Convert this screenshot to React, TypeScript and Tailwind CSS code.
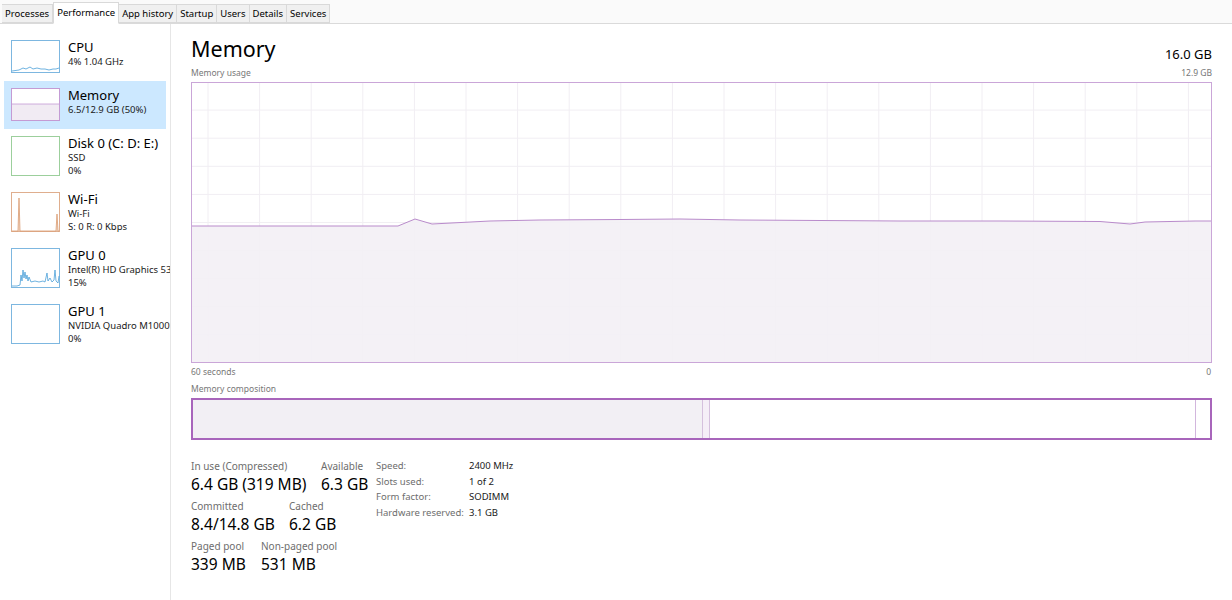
import React from 'react';

const tabs = ['Processes', 'Performance', 'App history', 'Startup', 'Users', 'Details', 'Services'];

// thumbnails in the left list
const Thumb = ({ kind, h }: { kind: string; h: number }) => {
  const w = 49;
  const border: Record<string, string> = {
    cpu: '#7db7e0',
    mem: '#c49bd4',
    disk: '#9ccf9c',
    wifi: '#dfae8e',
    gpu0: '#7db7e0',
    gpu1: '#7db7e0',
  };
  return (
    <svg width={w} height={h} className="shrink-0">
      <rect x={0.5} y={0.5} width={w - 1} height={h - 1} fill="white" stroke={border[kind]} />
      {kind === 'cpu' && (
        <polyline
          points="1,31 8,30 12,28 15,29 19,27 22,29 26,28 30,29 34,29 38,30 42,29 45,29 48,28"
          fill="none"
          stroke="#4aa0d8"
          strokeWidth={0.8}
        />
      )}
      {kind === 'mem' && (
        <>
          <rect x={1} y={16} width={w - 2} height={h - 17} fill="#f1ebf3" />
          <line x1={1} y1={16} x2={w - 1} y2={16} stroke="#c49bd4" strokeWidth={0.8} />
        </>
      )}
      {kind === 'wifi' && (
        <>
          <polygon points="7,39 8,6 9,39" fill="#f4dccb" />
          <polygon points="45,39 46,22 47,39" fill="#f4dccb" />
          <polyline points="1,39 7,39 8,6 9,39 45,39 46,22 47,39 48,39" fill="none" stroke="#d99a70" strokeWidth={0.8} />
        </>
      )}
      {kind === 'gpu0' && (
        <polyline
          points="1,38 6,38 9,37 10,27 11,33 12,22 13,30 14,24 15,31 16,27 17,33 18,29 20,34 24,33 28,34 32,33 34,34 36,25 37,33 39,30 41,34 43,32 44,22 45,33 47,35 48,28"
          fill="none"
          stroke="#4aa0d8"
          strokeWidth={0.8}
        />
      )}
    </svg>
  );
};

const items = [
  { kind: 'cpu', title: 'CPU', lines: ['4%  1.04 GHz'], h: 33 },
  { kind: 'mem', title: 'Memory', lines: ['6.5/12.9 GB (50%)'], h: 33, active: true },
  { kind: 'disk', title: 'Disk 0 (C: D: E:)', lines: ['SSD', '0%'], h: 40 },
  { kind: 'wifi', title: 'Wi-Fi', lines: ['Wi-Fi', 'S: 0  R: 0 Kbps'], h: 40 },
  { kind: 'gpu0', title: 'GPU 0', lines: ['Intel(R) HD Graphics 530', '15%'], h: 40 },
  { kind: 'gpu1', title: 'GPU 1', lines: ['NVIDIA Quadro M1000M', '0%'], h: 40 },
];

// usage line, in chart coordinates (chart is 1021 x 281)
const usage = [
  [0, 144], [207, 144], [224, 137], [241, 142], [299, 139], [349, 138], [429, 137.5],
  [489, 137], [549, 138], [709, 139], [809, 139], [909, 139.5], [939, 142], [954, 140],
  [1004, 139], [1021, 139],
];

const Chart = () => {
  const W = 1021;
  const H = 281;
  const cols = Array.from({ length: 20 }, (_, i) => 17 + i * 51.6);
  const rows = Array.from({ length: 9 }, (_, i) => (i + 1) * 28.1);
  const line = usage.map((p) => p.join(',')).join(' ');
  const area = `0,${H} ${line} ${W},${H}`;
  return (
    <svg width={W} height={H} className="block">
      <rect x={0} y={0} width={W} height={H} fill="white" />
      {cols.map((x) => (
        <line key={x} x1={x} y1={0} x2={x} y2={H} stroke="#f1eef3" />
      ))}
      {rows.map((y) => (
        <line key={y} x1={0} y1={y} x2={W} y2={y} stroke="#f1eef3" />
      ))}
      <polygon points={area} fill="#f3f0f5" fillOpacity={0.9} />
      <polyline points={line} fill="none" stroke="#b98bcb" strokeWidth={1} />
      <rect x={0.5} y={0.5} width={W - 1} height={H - 1} fill="none" stroke="#caa6d8" />
    </svg>
  );
};

const Stat = ({ label, value, className = '' }: { label: string; value: string; className?: string }) => (
  <div className={className}>
    <div className="text-[10px] leading-[13px] text-[#6d6d6d]">{label}</div>
    <div className="text-[15.5px] leading-[22px] text-black">{value}</div>
  </div>
);

export default function App() {
  return (
    <div
      className="w-[1232px] h-[600px] bg-white overflow-hidden text-black"
      style={{ fontFamily: '"Noto Sans", "Open Sans", sans-serif' }}
    >
      {/* tabs */}
      <div className="h-[24px] flex items-end pl-[2px] border-b border-[#dadada] bg-[#fafafa]">
        {tabs.map((t) => (
          <div
            key={t}
            className={
              t === 'Performance'
                ? 'h-[22px] px-[3px] -mb-px bg-white border border-[#d9d9d9] border-b-white text-[9.5px] leading-[20px] text-black'
                : 'h-[19px] px-[3px] bg-[#f0f0f0] border border-[#d9d9d9] border-l-0 text-[9.5px] leading-[18px] text-black'
            }
          >
            {t}
          </div>
        ))}
      </div>

      <div className="flex">
        {/* left list */}
        <div className="w-[171px] shrink-0 h-[576px] overflow-hidden border-r border-[#e6e6e6] pt-[9px] pl-[4px]">
          {items.map((it) => (
            <div
              key={it.title}
              className={`w-[162px] flex gap-[8px] pl-[7px] ${it.active ? 'bg-[#cce8ff]' : ''} ${
                it.h === 33 ? 'h-[48px] pt-[7px]' : 'h-[56px] pt-[7px]'
              }`}
            >
              <Thumb kind={it.kind} h={it.h} />
              <div className="whitespace-nowrap">
                <div className="text-[13px] leading-[16px] -mt-[1px]">{it.title}</div>
                {it.lines.map((l) => (
                  <div key={l} className="text-[9.5px] leading-[13px] text-[#1a1a1a]">
                    {l}
                  </div>
                ))}
              </div>
            </div>
          ))}
        </div>

        {/* main panel */}
        <div className="flex-1 pl-[20px] pr-[20px] pt-[9px]">
          <div className="flex items-end justify-between">
            <div className="text-[21.5px] leading-[32px]">Memory</div>
            <div className="text-[13px] leading-[18px] pb-[2px]">16.0 GB</div>
          </div>
          <div className="flex justify-between text-[8.5px] leading-[14px] text-[#777] mt-[1px]">
            <span>Memory usage</span>
            <span>12.9 GB</span>
          </div>
          <div className="mt-[2px]">
            <Chart />
          </div>
          <div className="flex justify-between text-[8.5px] leading-[14px] text-[#777] mt-[2px]">
            <span>60 seconds</span>
            <span className="pr-[1px]">0</span>
          </div>
          <div className="text-[8.5px] leading-[14px] text-[#777] mt-[3px]">Memory composition</div>

          {/* composition bar */}
          <div className="mt-[2px] h-[42px] flex border-2 border-[#a865bb]">
            <div className="w-[509px] bg-[#f2eff4]" />
            <div className="w-[8px] bg-[#f5eef7] border-x border-[#d5c0dd]" />
            <div className="w-[486px] bg-white border-r border-[#d2b6dd]" />
            <div className="flex-1 bg-white" />
          </div>

          {/* stats */}
          <div className="flex mt-[20px]">
            <div className="w-[185px]">
              <div className="flex">
                <Stat label="In use (Compressed)" value="6.4 GB (319 MB)" className="w-[130px]" />
                <Stat label="Available" value="6.3 GB" />
              </div>
              <div className="flex mt-[5px]">
                <Stat label="Committed" value="8.4/14.8 GB" className="w-[98px]" />
                <Stat label="Cached" value="6.2 GB" />
              </div>
              <div className="flex mt-[5px]">
                <Stat label="Paged pool" value="339 MB" className="w-[70px]" />
                <Stat label="Non-paged pool" value="531 MB" />
              </div>
            </div>
            <div className="text-[9.5px] leading-[15.5px] -mt-[2px]">
              {[
                ['Speed:', '2400 MHz'],
                ['Slots used:', '1 of 2'],
                ['Form factor:', 'SODIMM'],
                ['Hardware reserved:', '3.1 GB'],
              ].map(([k, v]) => (
                <div key={k} className="flex">
                  <span className="w-[93px] text-[#6d6d6d]">{k}</span>
                  <span className="text-[#1a1a1a]">{v}</span>
                </div>
              ))}
            </div>
          </div>
        </div>
      </div>
    </div>
  );
}
